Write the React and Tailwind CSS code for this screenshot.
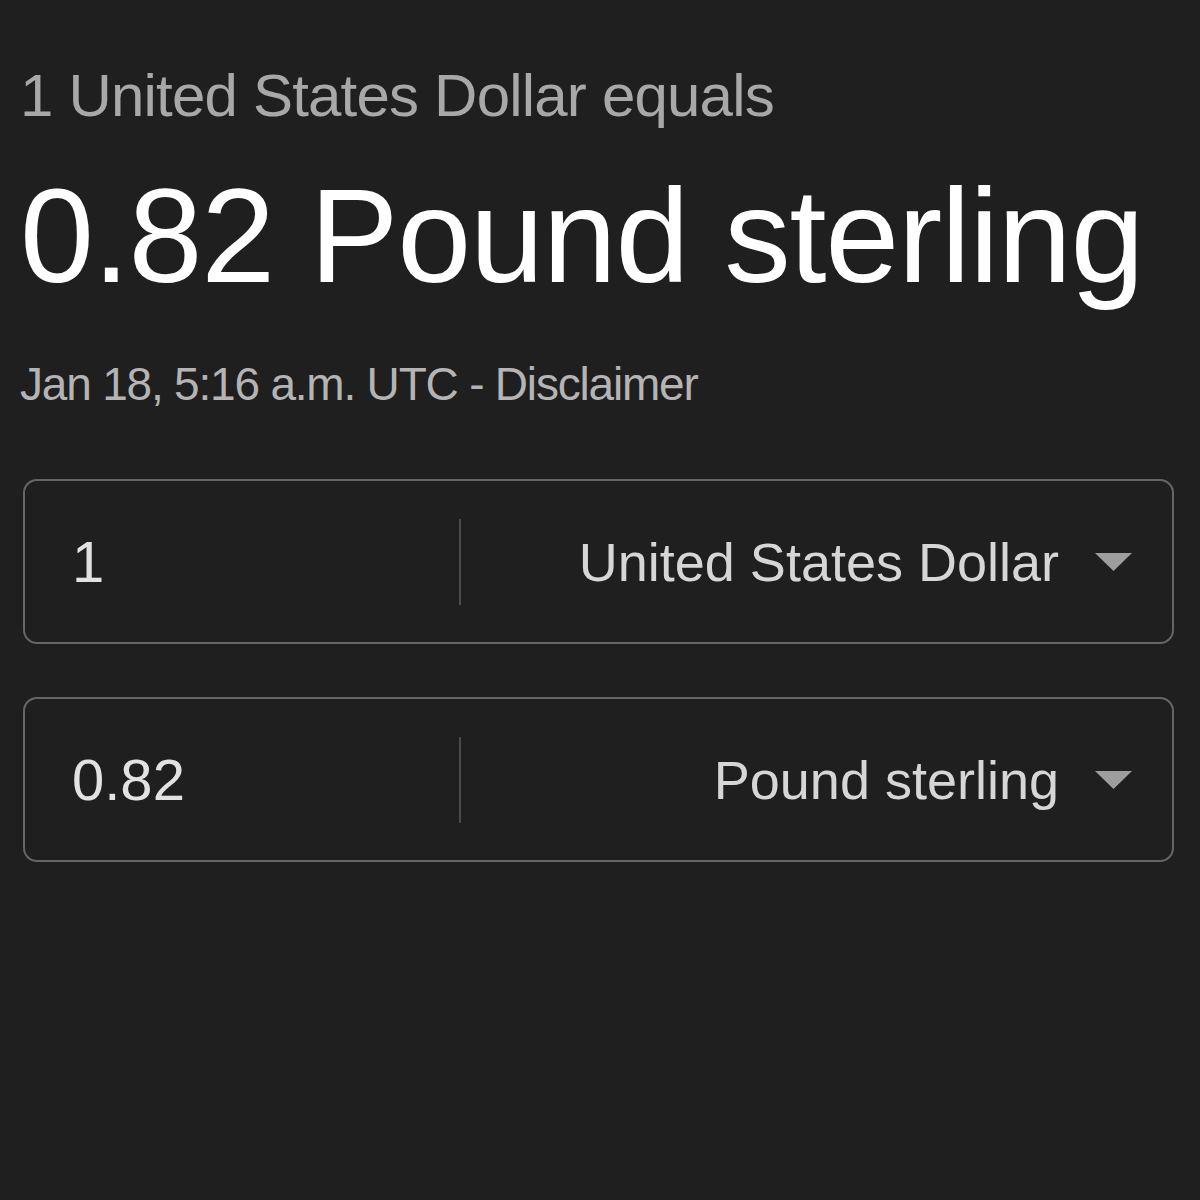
const Caret = () => (
  <svg width="37" height="18" viewBox="0 0 37 18" className="shrink-0">
    <polygon points="0,0 37,0 18.5,18" fill="#9e9e9e" />
  </svg>
);

const ConverterRow = ({ value, currency }) => (
  <div className="ml-[3px] mr-[26px] flex h-[165px] items-center rounded-[14px] border-2 border-[#666666]">
    <div className="flex w-[434px] items-center pl-[47px] text-[58px] leading-none text-[#e2e2e2]">
      {value}
    </div>
    <div className="h-[86px] w-[2px] bg-[#4a4a4a]" />
    <div className="flex flex-1 items-center justify-end gap-[36px] pr-[40px]">
      <span className="text-[54px] leading-none text-[#d6d6d6]">
        {currency}
      </span>
      <Caret />
    </div>
  </div>
);

export default function App() {
  return (
    <div
      className="flex h-[1200px] w-full flex-col bg-[#1f1f1f] pl-[20px]"
      style={{ fontFamily: '"Liberation Sans", Arial, sans-serif' }}
    >
      <div className="mt-[66px] text-[60px] leading-[60px] tracking-[-0.8px] text-[#a8a8a8]">
        1 United States Dollar equals
      </div>
      <div className="mt-[44px] text-[133px] leading-none tracking-[-1.2px] text-white">
        0.82 Pound sterling
      </div>
      <div className="mt-[58px] text-[46px] leading-none tracking-[-1.2px] text-[#b4b4b4]">
        Jan 18, 5:16 a.m. UTC - Disclaimer
      </div>
      <div className="mt-[72px] flex flex-col gap-[53px]">
        <ConverterRow value="1" currency="United States Dollar" />
        <ConverterRow value="0.82" currency="Pound sterling" />
      </div>
    </div>
  );
}
